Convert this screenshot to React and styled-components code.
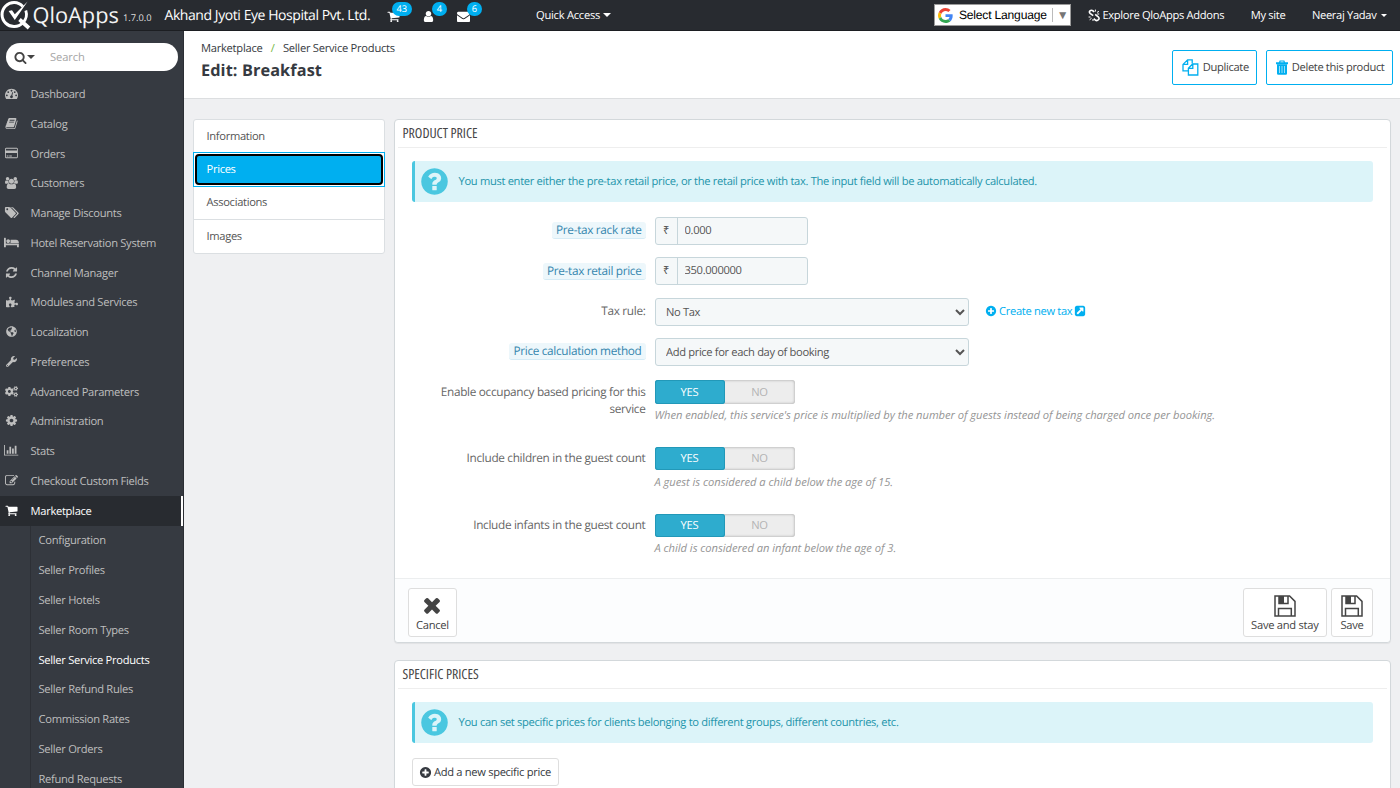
import React, { useState } from 'react';
import styled, { createGlobalStyle, css } from 'styled-components';
import { FaCogs, FaGlobeAmericas, FaPuzzlePiece, FaWrench } from 'react-icons/fa';

const GlobalStyle = createGlobalStyle`
    * {
        box-sizing: border-box;
    }

    body {
        margin: 0;
        height: 788px;
        overflow: hidden;
        background: #eff0f2;
        color: #555;
        font-family: 'Open Sans', 'Noto Sans', sans-serif;
        font-size: 11.17px;
        letter-spacing: -0.32px;
        text-rendering: geometricPrecision;
    }

    button,
    input,
    select {
        letter-spacing: inherit;
        text-rendering: inherit;
    }

    svg {
        display: block;
        flex-shrink: 0;
    }
`;

const glyphs = {
    dashboard: [1792, 'M384 1152q0-53-37.5-90.5t-90.5-37.5-90.5 37.5-37.5 90.5 37.5 90.5 90.5 37.5 90.5-37.5 37.5-90.5zm192-448q0-53-37.5-90.5t-90.5-37.5-90.5 37.5-37.5 90.5 37.5 90.5 90.5 37.5 90.5-37.5 37.5-90.5zm428 481l101-382q6-26-7.5-48.5t-38.5-29.5-48 6.5-30 39.5l-101 382q-60 5-107 43.5t-63 98.5q-20 77 20 146t117 89 146-20 89-117q16-60-6-117t-72-91zm660-33q0-53-37.5-90.5t-90.5-37.5-90.5 37.5-37.5 90.5 37.5 90.5 90.5 37.5 90.5-37.5 37.5-90.5zm-640-640q0-53-37.5-90.5t-90.5-37.5-90.5 37.5-37.5 90.5 37.5 90.5 90.5 37.5 90.5-37.5 37.5-90.5zm448 192q0-53-37.5-90.5t-90.5-37.5-90.5 37.5-37.5 90.5 37.5 90.5 90.5 37.5 90.5-37.5 37.5-90.5zm320 448q0 261-141 483-19 29-54 29h-1402q-35 0-54-29-141-221-141-483 0-182 71-348t191-286 286-191 348-71 348 71 286 191 191 286 71 348z'],
    book: [1792, 'M1703 478q40 57 18 129l-275 906q-19 64-76.5 107.5t-122.5 43.5h-923q-77 0-148.5-53.5t-99.5-131.5q-24-67-2-127 0-4 3-27t4-37q1-8-3-21.5t-3-19.5q2-11 8-21t16.5-23.5 16.5-23.5q23-38 45-91.5t30-91.5q3-10 .5-30t-.5-28q3-11 17-28t17-23q21-36 42-92t25-90q1-9-2.5-32t.5-28q4-13 22-30.5t22-22.5q19-26 42.5-84.5t27.5-96.5q1-8-3-25.5t-2-26.5q2-8 9-18t18-23 17-21q8-12 16.5-30.5t15-35 16-36 19.5-32 26.5-23.5 36-11.5 47.5 5.5l-1 3q38-9 51-9h761q74 0 114 56t18 130l-274 906q-36 119-71.5 153.5t-128.5 34.5h-869q-27 0-38 15-11 16-1 43 24 70 144 70h923q29 0 56-15.5t35-41.5l300-987q7-22 5-57 38 15 59 43zm-1064 2q-4 13 2 22.5t20 9.5h608q13 0 25.5-9.5t16.5-22.5l21-64q4-13-2-22.5t-20-9.5h-608q-13 0-25.5 9.5t-16.5 22.5zm-83 256q-4 13 2 22.5t20 9.5h608q13 0 25.5-9.5t16.5-22.5l21-64q4-13-2-22.5t-20-9.5h-608q-13 0-25.5 9.5t-16.5 22.5z'],
    card: [1920, 'M1760 128q66 0 113 47t47 113v1216q0 66-47 113t-113 47h-1600q-66 0-113-47t-47-113v-1216q0-66 47-113t113-47h1600zm-1600 128q-13 0-22.5 9.5t-9.5 22.5v224h1664v-224q0-13-9.5-22.5t-22.5-9.5h-1600zm1600 1280q13 0 22.5-9.5t9.5-22.5v-608h-1664v608q0 13 9.5 22.5t22.5 9.5h1600zm-1504-128v-128h256v128h-256zm384 0v-128h384v128h-384z'],
    users: [1920, 'M593 896q-162 5-265 128h-134q-82 0-138-40.5t-56-118.5q0-353 124-353 6 0 43.5 21t97.5 42.5 119 21.5q67 0 133-23-5 37-5 66 0 159 93 293zm1071 637q0 120-73 189.5t-194 69.5h-874q-121 0-194-69.5t-73-189.5q0-53 3.5-103.5t14-109 26.5-108.5 43-97.5 62-81 85.5-53.5 111.5-20q10 0 43 21.5t73 48 107 48 135 21.5 135-21.5 107-48 73-48 43-21.5q61 0 111.5 20t85.5 53.5 62 81 43 97.5 26.5 108.5 14 109 3.5 103.5zm-1024-1277q0 106-75 181t-181 75-181-75-75-181 75-181 181-75 181 75 75 181zm704 384q0 159-112.5 271.5t-271.5 112.5-271.5-112.5-112.5-271.5 112.5-271.5 271.5-112.5 271.5 112.5 112.5 271.5zm576 225q0 78-56 118.5t-138 40.5h-134q-103-123-265-128 93-134 93-293 0-29-5-66 66 23 133 23 59 0 119-21.5t97.5-42.5 43.5-21q124 0 124 353zm-128-609q0 106-75 181t-181 75-181-75-75-181 75-181 181-75 181 75 75 181z'],
    tags: [2048, 'M576 448q0-53-37.5-90.5t-90.5-37.5-90.5 37.5-37.5 90.5 37.5 90.5 90.5 37.5 90.5-37.5 37.5-90.5zm1067 576q0 53-37 90l-491 492q-39 37-91 37-53 0-90-37l-715-716q-38-37-64.5-101t-26.5-117v-416q0-52 38-90t90-38h416q53 0 117 26.5t102 64.5l715 714q37 39 37 91zm384 0q0 53-37 90l-491 492q-39 37-91 37-36 0-59-14t-53-45l470-470q37-37 37-90 0-52-37-91l-715-714q-38-38-102-64.5t-117-26.5h224q53 0 117 26.5t102 64.5l715 714q37 39 37 91z'],
    bed: [2048, 'M256 1024h1728q26 0 45 19t19 45v448h-256v-256h-1536v256h-256v-1216q0-26 19-45t45-19h128q26 0 45 19t19 45v704zm576-320q0-106-75-181t-181-75-181 75-75 181 75 181 181 75 181-75 75-181zm1216 256v-64q0-159-112.5-271.5t-271.5-112.5h-704q-26 0-45 19t-19 45v384h1152z'],
    refresh: [1792, 'M1639 1056q0 5-1 7-64 268-268 434.5t-478 166.5q-146 0-282.5-55t-243.5-157l-129 129q-19 19-45 19t-45-19-19-45v-448q0-26 19-45t45-19h448q26 0 45 19t19 45-19 45l-137 137q71 66 161 102t187 36q134 0 250-65t186-179q11-17 53-117 8-23 30-23h192q13 0 22.5 9.5t9.5 22.5zm25-800v448q0 26-19 45t-45 19h-448q-26 0-45-19t-19-45 19-45l138-138q-148-137-349-137-134 0-250 65t-186 179q-11 17-53 117-8 23-30 23h-199q-13 0-22.5-9.5t-9.5-22.5v-7q65-268 270-434.5t480-166.5q146 0 284 55.5t245 156.5l130-129q19-19 45-19t45 19 19 45z'],
    cog: [1792, 'M1152 896q0-106-75-181t-181-75-181 75-75 181 75 181 181 75 181-75 75-181zm512-109v222q0 12-8 23t-20 13l-185 28q-19 54-39 91 35 50 107 138 10 12 10 25t-9 23q-27 37-99 108t-94 71q-12 0-26-9l-138-108q-44 23-91 38-16 136-29 186-7 28-36 28h-222q-14 0-24.5-8.5t-11.5-21.5l-28-184q-49-16-90-37l-141 107q-10 9-25 9-14 0-25-11-126-114-165-168-7-10-7-23 0-12 8-23 15-21 51-66.5t54-70.5q-27-50-41-99l-183-27q-13-2-21-12.5t-8-23.5v-222q0-12 8-23t19-13l186-28q14-46 39-92-40-57-107-138-10-12-10-24 0-10 9-23 26-36 98.5-107.5t94.5-71.5q13 0 26 10l138 107q44-23 91-38 16-136 29-186 7-28 36-28h222q14 0 24.5 8.5t11.5 21.5l28 184q49 16 90 37l142-107q9-9 24-9 13 0 25 10 129 119 165 170 7 8 7 22 0 12-8 23-15 21-51 66.5t-54 70.5q26 50 41 98l183 28q13 2 21 12.5t8 23.5z'],
    chart: [2048, 'M640 896v512h-256v-512h256zm384-512v1024h-256v-1024h256zm1024 1152v128h-2048v-1536h128v1408h1920zm-640-896v768h-256v-768h256zm384-384v1152h-256v-1152h256z'],
    edit: [1792, 'M888 1184l116-116-152-152-116 116v56h96v96h56zm440-720q-16-16-33 1l-350 350q-17 17-1 33t33-1l350-350q17-17 1-33zm80 594v190q0 119-84.5 203.5t-203.5 84.5h-832q-119 0-203.5-84.5t-84.5-203.5v-832q0-119 84.5-203.5t203.5-84.5h832q63 0 117 25 15 7 18 23 3 17-9 29l-49 49q-14 14-32 8-23-6-45-6h-832q-66 0-113 47t-47 113v832q0 66 47 113t113 47h832q66 0 113-47t47-113v-126q0-13 9-22l64-64q15-15 35-7t20 29zm-96-738l288 288-672 672h-288v-288zm444 132l-92 92-288-288 92-92q28-28 68-28t68 28l152 152q28 28 28 68t-28 68z'],
    cart: [1792, 'M704 1536q0 52-38 90t-90 38-90-38-38-90 38-90 90-38 90 38 38 90zm896 0q0 52-38 90t-90 38-90-38-38-90 38-90 90-38 90 38 38 90zm128-1088v512q0 24-16.5 42.5t-40.5 21.5l-1044 122q13 60 13 70 0 16-24 64h920q26 0 45 19t19 45-19 45-45 19h-1024q-26 0-45-19t-19-45q0-11 8-31.5t16-36 21.5-40 15.5-29.5l-177-823h-204q-26 0-45-19t-19-45 19-45 45-19h256q16 0 28.5 6.5t19.5 15.5 13 24.5 8 26 5.5 29.5 4.5 26h1201q26 0 45 19t19 45z'],
    user: [1792, 'M1536 1399q0 109-62.5 187t-150.5 78h-854q-88 0-150.5-78t-62.5-187q0-85 8.5-160.5t31.5-152 58.5-131 94-89 134.5-34.5q131 128 313 128t313-128q76 0 134.5 34.5t94 89 58.5 131 31.5 152 8.5 160.5zm-256-887q0 159-112.5 271.5t-271.5 112.5-271.5-112.5-112.5-271.5 112.5-271.5 271.5-112.5 271.5 112.5 112.5 271.5z'],
    envelope: [1792, 'M1792 710v794q0 66-47 113t-113 47h-1472q-66 0-113-47t-47-113v-794q44 49 101 87 362 246 497 345 57 42 92.5 65.5t94.5 48 110 24.5h2q51 0 110-24.5t94.5-48 92.5-65.5q170-123 498-345 57-39 100-87zm0-294q0 79-49 151t-122 123q-376 261-468 325-10 7-42.5 31t-54 38.5-52 32.5-57.5 27-50 9h-2q-23 0-50-9t-57.5-27-52-32.5-54-38.5-42.5-31q-91-64-262-182.5t-205-142.5q-62-42-117-115.5t-55-136.5q0-78 41.5-130t118.5-52h1472q65 0 112.5 47t47.5 113z'],
    search: [1792, 'M1216 832q0-185-131.5-316.5t-316.5-131.5-316.5 131.5-131.5 316.5 131.5 316.5 316.5 131.5 316.5-131.5 131.5-316.5zm512 832q0 52-38 90t-90 38q-54 0-90-38l-343-342q-179 124-399 124-143 0-273.5-55.5t-225-150-150-225-55.5-273.5 55.5-273.5 150-225 225-150 273.5-55.5 273.5 55.5 225 150 150 225 55.5 273.5q0 220-124 399l343 343q37 37 37 90z'],
    plus: [1792, 'M1344 960v-128q0-26-19-45t-45-19h-256v-256q0-26-19-45t-45-19h-128q-26 0-45 19t-19 45v256h-256q-26 0-45 19t-19 45v128q0 26 19 45t45 19h256v256q0 26 19 45t45 19h128q26 0 45-19t19-45v-256h256q26 0 45-19t19-45zm320-64q0 209-103 385.5t-279.5 279.5-385.5 103-385.5-103-279.5-279.5-103-385.5 103-385.5 279.5-279.5 385.5-103 385.5 103 279.5 279.5 103 385.5z'],
    question: [1792, 'M1024 1376v-192q0-14-9-23t-23-9h-192q-14 0-23 9t-9 23v192q0 14 9 23t23 9h192q14 0 23-9t9-23zm256-672q0-88-55.5-163t-138.5-116-170-41q-243 0-371 213-15 24 8 42l132 100q7 6 19 6 16 0 25-12 53-68 86-92 34-24 86-24 48 0 85.5 26t37.5 59q0 38-20 61t-68 45q-63 28-115.5 86.5t-52.5 125.5v36q0 14 9 23t23 9h192q14 0 23-9t9-23q0-19 21.5-49.5t54.5-49.5q32-18 49-28.5t46-35 44.5-48 28-60.5 12.5-81zm384 192q0 209-103 385.5t-279.5 279.5-385.5 103-385.5-103-279.5-279.5-103-385.5 103-385.5 279.5-279.5 385.5-103 385.5 103 279.5 279.5 103 385.5z'],
    external: [1792, 'M1408 928v-480q0-26-19-45t-45-19h-480q-42 0-59 39-17 41 14 70l144 144-534 534q-19 19-19 45t19 45l102 102q19 19 45 19t45-19l534-534 144 144q18 19 45 19 12 0 25-5 39-17 39-59zm256-512v960q0 119-84.5 203.5t-203.5 84.5h-960q-119 0-203.5-84.5t-84.5-203.5v-960q0-119 84.5-203.5t203.5-84.5h960q119 0 203.5 84.5t84.5 203.5z'],
    times: [1792, 'M1490 1322q0 40-28 68l-136 136q-28 28-68 28t-68-28l-294-294-294 294q-28 28-68 28t-68-28l-136-136q-28-28-28-68t28-68l294-294-294-294q-28-28-28-68t28-68l136-136q28-28 68-28t68 28l294 294 294-294q28-28 68-28t68 28l136 136q28 28 28 68t-28 68l-294 294 294 294q28 28 28 68z'],
};

const Glyph = ({ name, size = 13 }) => {
    const [width, d] = glyphs[name];
    return (
        <svg width={(size * width) / 1792} height={size} viewBox={`0 0 ${width} 1792`} fill="currentColor">
            <path d={d} />
        </svg>
    );
};

const Caret = styled.span`
    display: inline-block;
    border: ${({ $size = 4 }) => $size}px solid transparent;
    border-top-color: currentColor;
    border-bottom: 0;
`;

/* ---------- top bar ---------- */

const TopBar = styled.header`
    display: flex;
    align-items: center;
    height: 31px;
    background: #282b30;
    border-bottom: 1px solid #1c1e22;
    color: #fff;
    white-space: nowrap;
`;

const Logo = styled.div`
    display: flex;
    align-items: center;
    gap: 0.5px;
    width: 123px;
    height: 31px;
    color: #f4f4f4;
    font-size: 21.8px;
    letter-spacing: 0;
    line-height: 31px;
`;

const Version = styled.span`
    width: 41.5px;
    padding-top: 4px;
    color: #ddd;
    font-size: 9.3px;
    letter-spacing: 0;
`;

const ShopName = styled.span`
    width: 222.5px;
    font-size: 14px;
    letter-spacing: -0.43px;
`;

const Notification = styled.span`
    position: relative;
    width: 35px;
    height: 31px;
    padding-top: 10px;
`;

const Badge = styled.span`
    position: absolute;
    top: 2px;
    left: ${({ $left }) => $left}px;
    min-width: 15px;
    height: 14.5px;
    padding: 0 4.5px;
    border-radius: 8px;
    background: #00aff0;
    font-size: 9.3px;
    letter-spacing: 0;
    line-height: 14px;
    text-align: center;
`;

const QuickAccess = styled.span`
    display: flex;
    align-items: center;
    gap: 3px;
    margin-left: 44px;
    letter-spacing: -0.25px;
`;

const TopRight = styled.div`
    display: flex;
    align-items: center;
    margin-left: auto;
    padding-right: 13px;
`;

const Translate = styled.div`
    display: flex;
    align-items: center;
    width: 137.5px;
    height: 22px;
    margin-right: 17px;
    padding: 0 4px 0 3px;
    border: 1px solid #9b9b9b;
    background: #fff;
    color: #000;
    font-family: 'Liberation Sans', Arial, sans-serif;
    font-size: 12.1px;
    letter-spacing: -0.2px;

    svg {
        margin-right: 6px;
    }
`;

const TranslateArrow = styled.span`
    height: 14px;
    margin-left: 5px;
    padding-left: 4px;
    border-left: 1px solid #bbb;
    color: #767676;
    font-size: 12px;
    line-height: 14px;
`;

const TopLink = styled.a`
    display: flex;
    align-items: center;
    gap: ${({ $gap = 6 }) => $gap}px;
    margin-right: ${({ $after = 0 }) => $after}px;
`;

/* ---------- sidebar ---------- */

const Body = styled.div`
    display: flex;
    height: 757px;
    overflow: hidden;
`;

const Sidebar = styled.nav`
    flex: 0 0 184px;
    overflow: hidden;
    background: #363a41;
    border-right: 1px solid #2b2e34;
    color: #bebebe;
    letter-spacing: -0.3px;
`;

const SearchBox = styled.div`
    display: flex;
    align-items: center;
    width: 172px;
    height: 28px;
    margin: 12px 0 8.6px 6px;
    padding-left: 8px;
    border-radius: 14px;
    background: #fff;
    color: #444;

    input {
        width: 110px;
        margin-left: 15px;
        padding: 0;
        border: 0;
        outline: 0;
        background: none;
        font: inherit;
        letter-spacing: -0.1px;

        &::placeholder {
            color: #a5a5a5;
        }
    }
`;

const MenuItem = styled.a`
    display: flex;
    align-items: center;
    height: 29.78px;
    padding-left: 5px;

    ${({ $active }) => $active && css`
        background: #282b30;
        border-right: 2px solid #fff;
        color: #fff;
    `}
`;

const MenuIcon = styled.span`
    display: flex;
    justify-content: center;
    width: 13px;
    margin: -2px 12.5px 0 0;
`;

const SubMenu = styled.div`
    margin-left: 30px;
    border-left: 1px solid #2d3036;
`;

const SubItem = styled.a`
    display: flex;
    align-items: center;
    height: 29.78px;
    padding-left: 7.5px;
    color: ${({ $active }) => ($active ? '#fff' : '#bebebe')};
`;

/* ---------- page ---------- */

const Main = styled.main`
    flex: 1;
    min-width: 0;
`;

const PageHead = styled.div`
    display: flex;
    justify-content: space-between;
    height: 68px;
    padding: 9.5px 7px 0 17px;
    background: #fff;
    border-bottom: 1px solid #dcdee0;
    color: #363a41;
`;

const Breadcrumb = styled.div`
    display: flex;
    gap: 8.3px;
    letter-spacing: -0.26px;
    line-height: 15px;

    i {
        color: #72b73f;
        font-style: normal;
    }
`;

const PageTitle = styled.h1`
    margin: 3.5px 0 0;
    font-size: 16.3px;
    font-weight: 700;
    letter-spacing: 0.1px;
    line-height: 22px;
`;

const HeadActions = styled.div`
    display: flex;
    gap: 9px;
    padding-top: 9.5px;
`;

const HeadButton = styled.button`
    display: flex;
    align-items: center;
    gap: 4px;
    height: 35px;
    padding: 0 7.5px 1px 8.5px;
    border: 1px solid #00aff0;
    border-radius: 2px;
    background: #fff;
    color: #444;
    font: inherit;
    letter-spacing: -0.36px;

    svg {
        color: #00aff0;
    }
`;

const Columns = styled.div`
    display: flex;
    align-items: flex-start;
    gap: 9px;
    padding: 20px 9px 0;
`;

const TabList = styled.div`
    flex: 0 0 192px;
    border: 1px solid #dbdfe2;
    border-radius: 3px;
    background: #fff;
`;

const Tab = styled.button`
    display: block;
    width: 100%;
    height: 33.3px;
    padding: 0 12.5px;
    border: 0;
    border-bottom: 1px solid #dbdfe2;
    background: none;
    color: #555;
    font: inherit;
    text-align: left;

    &:last-child {
        border-bottom: 0;
    }
`;

const ActiveTab = styled.div`
    height: 34.3px;
    margin: -1px -1px 0;
    padding: 1px;
    border: 1px solid #00aff0;
    background: #fff;

    ${Tab} {
        height: 100%;
        padding: 0 9.5px;
        border: 2px solid #000;
        border-radius: 4px;
        background: #00aff0;
        color: #fff;
    }
`;

const Panels = styled.div`
    flex: 1;
    min-width: 0;
`;

const Panel = styled.section`
    margin-bottom: 17.4px;
    border: 1px solid #d3d8db;
    border-radius: 4px;
    background: #fff;
    box-shadow: 0 1px 1px rgba(0, 0, 0, 0.06);
`;

const PanelHeading = styled.h3`
    height: 28px;
    margin: 0 3px;
    padding-left: 4.5px;
    border-bottom: 1px solid #eee;
    color: #444;
    font-size: 13.9px;
    font-stretch: 75%;
    font-weight: 400;
    letter-spacing: -0.03px;
    line-height: 28px;
`;

const PanelBody = styled.div`
    padding: 13.3px 17px 0;
`;

const Alert = styled.div`
    display: flex;
    align-items: center;
    height: 41px;
    padding-left: 3.5px;
    border-left: 3px solid #4ac7e0;
    border-radius: 3px;
    background: #dcf4f9;
    color: #1e94ab;

    svg {
        margin-right: 9px;
        color: #4ac7e0;
    }
`;

const FormRow = styled.div`
    display: grid;
    grid-template-columns: 233.5px 1fr;
    column-gap: 9px;
    height: ${({ $tall }) => ($tall ? 66.6 : 40.4)}px;
`;

const Form = styled.div`
    height: 375.5px;
    padding-top: 14.5px;
`;

const Label = styled.label`
    padding-top: 5.5px;
    color: #666;
    font-size: 11.8px;
    line-height: 17px;
    text-align: right;

    span {
        display: inline-block;
        padding: 0 4px;
        border-bottom: 1px solid #d5ebf5;
        border-radius: 3px;
        background: #edf7fb;
        color: #3586ae;
        line-height: 16px;
    }
`;

const PriceInput = styled.div`
    display: flex;
    width: 153.5px;
    height: 28px;
    border: 1px solid #c7d6db;
    border-radius: 3px;
    background: #f5f8f9;
    overflow: hidden;

    span {
        width: 22px;
        border-right: 1px solid #c7d6db;
        line-height: 25px;
        text-align: center;
    }

    input {
        flex: 1;
        min-width: 0;
        padding: 0 7px 0.5px;
        border: 0;
        background: none;
        color: #555;
        font: inherit;
    }
`;

const Inline = styled.div`
    display: flex;
    align-items: flex-start;
    gap: 16px;
`;

const Select = styled.select`
    width: 314.5px;
    height: 28px;
    padding: 1px 2px 0 6.5px;
    border: 1px solid #c7d6db;
    border-radius: 3px;
    background: #f5f8f9;
    color: #555;
    font: inherit;
    letter-spacing: -0.35px;
`;

const TaxLink = styled.a`
    display: flex;
    align-items: center;
    gap: 2px;
    height: 27px;
    color: #00aff0;
`;

const Switch = styled.div`
    display: flex;
    width: 140px;
    height: 23.5px;
    margin-top: 2px;
    border-radius: 3px;
    background: #ededed;
    box-shadow: inset 0 0 3px rgba(0, 0, 0, 0.35);
`;

const SwitchSide = styled.button`
    width: 70px;
    padding: 0;
    border: 0;
    border-radius: 3px;
    background: none;
    color: #b3b3b3;
    font: inherit;
    letter-spacing: -0.2px;
    line-height: 21px;

    ${({ $on }) => $on && css`
        background: #2eacce;
        box-shadow: inset 0 0 0 1px #2298b8;
        color: #fff;
    `}
`;

const Hint = styled.p`
    margin: 4.3px 0 0;
    color: #959595;
    font-style: italic;
    letter-spacing: -0.03px;
    line-height: 16px;
`;

const PanelFooter = styled.div`
    display: flex;
    gap: 4.5px;
    height: 64px;
    padding: 9px 17px 0 13px;
    border-top: 1px solid #eceeef;
    border-radius: 0 0 4px 4px;
    background: #fcfdfe;
`;

const FooterButton = styled.button`
    display: flex;
    flex-direction: column;
    align-items: center;
    justify-content: flex-end;
    gap: 1px;
    min-width: 42px;
    height: 49px;
    margin-right: ${({ $push }) => ($push ? 'auto' : 0)};
    padding: 0 7px 3px;
    border: 1px solid #dedede;
    border-radius: 3px;
    background: #fff;
    color: #444;
    font: inherit;
    letter-spacing: -0.27px;
`;

const AddButton = styled.button`
    display: flex;
    align-items: center;
    gap: 2px;
    height: 27.5px;
    margin-top: 15px;
    padding: 0 7px 0 6px;
    border: 1px solid #dedede;
    border-radius: 3px;
    background: #fff;
    color: #363a41;
    font: inherit;
`;

const SpecificBody = styled(PanelBody)`
    height: 130px;
`;

const QloMark = () => (
    <svg width="32" height="31" viewBox="0 0 32 31" fill="none" stroke="#fff">
        <path d="M22.8 6.4A12 12 0 1 0 22.8 22.8" strokeWidth="3" />
        <path d="M25.8 10.5A12 12 0 0 1 22.8 22.8" strokeWidth="2.8" />
        <path d="M19.5 19.5l9.5 8.5" strokeWidth="3.8" />
        <path d="M8.6 11l3.4-.8 2.8 4L27.6 1.6 14.800 20z" fill="#fff" stroke="none" />
    </svg>
);

const GoogleMark = () => (
    <svg width="15" height="15" viewBox="0 0 48 48">
        <path fill="#EA4335" d="M24 9.5c3.54 0 6.71 1.22 9.21 3.6l6.85-6.85C35.9 2.38 30.47 0 24 0 14.62 0 6.51 5.38 2.56 13.22l7.98 6.19C12.43 13.72 17.74 9.5 24 9.5z" />
        <path fill="#4285F4" d="M46.98 24.55c0-1.57-.15-3.09-.38-4.55H24v9.02h12.94c-.58 2.96-2.26 5.48-4.78 7.18l7.73 6c4.51-4.18 7.09-10.36 7.09-17.65z" />
        <path fill="#FBBC05" d="M10.53 28.59c-.48-1.45-.76-2.99-.76-4.59s.27-3.14.76-4.59l-7.98-6.19C.92 16.46 0 20.12 0 24c0 3.88.92 7.54 2.56 10.78l7.97-6.19z" />
        <path fill="#34A853" d="M24 48c6.48 0 11.93-2.13 15.89-5.81l-7.73-6c-2.15 1.45-4.92 2.3-8.16 2.3-6.26 0-11.57-4.22-13.47-9.91l-7.98 6.19C6.51 42.62 14.62 48 24 48z" />
    </svg>
);

const AddonsIcon = () => (
    <svg width="12" height="13" viewBox="0 0 12 13" fill="none" stroke="#fff" strokeWidth="1.6">
        <path d="M5.2 6.6L2.4 4.6Q.6 3 2 1.8T5.2 2l1 1" />
        <path d="M7.2 5.4l3 2.4q1.6 1.6.2 3T7.2 11l-1.4-1.4" />
        <path d="M7.4.6v2M9 3.4l2-1M3.6 9.2l-2 1.6M5 10v2M.6 8h2M9.2 5h2" strokeWidth="1" />
    </svg>
);

const CopyIcon = () => (
    <svg width="17" height="17" viewBox="0 0 17 17" fill="none" stroke="currentColor" strokeWidth="1.3">
        <path d="M6.4 11.8H1V5.4L5.6.8h4.6v3.6M5.6.8v4.6H1" />
        <path d="M6.4 9.2L10.6 5h5.2v11H6.4zM10.8 5v4.4H6.4" />
    </svg>
);

const TrashIcon = () => (
    <svg width="12" height="15" viewBox="0 0 12 15" fill="currentColor">
        <path fillRule="evenodd" d="M3.6.6h4.8l.6 1.600H12V4.200H0V2.200h3zM4.600 1.500l-.3.7h3.400l-.3-.7z" />
        <path fillRule="evenodd" d="M1 4.200h10V13.500q0 1.200-1.200 1.200H2.200q-1.200 0-1.200-1.200zM3.200 6v7h.6V6zM5.700 6v7h.6V6zM8.200 6v7h.6V6z" />
    </svg>
);

const SaveIcon = () => (
    <svg width="22" height="22" viewBox="0 0 22 22" fill="none" stroke="#444" strokeWidth="1.5">
        <path d="M1 1h14.6L21 6.400V21H1z" />
        <path d="M5 1v7.500h9V1" />
        <path d="M5 1h5v7H5z" fill="#444" stroke="none" />
        <path d="M4.500 21v-7.500h12.800V21" />
    </svg>
);

const menu = [
    ['Dashboard', <Glyph name="dashboard" />],
    ['Catalog', <Glyph name="book" />],
    ['Orders', <Glyph name="card" size={12} />],
    ['Customers', <Glyph name="users" size={12} />],
    ['Manage Discounts', <Glyph name="tags" />],
    ['Hotel Reservation System', <Glyph name="bed" />],
    ['Channel Manager', <Glyph name="refresh" />],
    ['Modules and Services', <FaPuzzlePiece size={12} />],
    ['Localization', <FaGlobeAmericas size={11} />],
    ['Preferences', <FaWrench size={11} />],
    ['Advanced Parameters', <FaCogs size={13} />],
    ['Administration', <Glyph name="cog" />],
    ['Stats', <Glyph name="chart" size={12.5} />],
    ['Checkout Custom Fields', <Glyph name="edit" />],
    ['Marketplace', <Glyph name="cart" />],
];

const subMenu = [
    'Configuration',
    'Seller Profiles',
    'Seller Hotels',
    'Seller Room Types',
    'Seller Service Products',
    'Seller Refund Rules',
    'Commission Rates',
    'Seller Orders',
    'Refund Requests',
];

const tabs = ['Information', 'Prices', 'Associations', 'Images'];

const YesNo = () => {
    const [on, setOn] = useState(true);

    return (
        <Switch>
            <SwitchSide $on={on} onClick={() => setOn(true)}>YES</SwitchSide>
            <SwitchSide $on={!on} onClick={() => setOn(false)}>NO</SwitchSide>
        </Switch>
    );
};

const SwitchRow = ({ label, hint }) => (
    <FormRow $tall>
        <Label>{label}</Label>
        <div>
            <YesNo />
            <Hint>{hint}</Hint>
        </div>
    </FormRow>
);

const PriceRow = ({ label, value }) => (
    <FormRow>
        <Label><span>{label}</span></Label>
        <PriceInput>
            <span>₹</span>
            <input defaultValue={value} />
        </PriceInput>
    </FormRow>
);

const Header = () => (
    <TopBar>
        <Logo><QloMark />QloApps</Logo>
        <Version>1.7.0.0</Version>
        <ShopName>Akhand Jyoti Eye Hospital Pvt. Ltd.</ShopName>
        <Notification><Glyph name="cart" /><Badge $left={5}>43</Badge></Notification>
        <Notification><Glyph name="user" /><Badge $left={10}>4</Badge></Notification>
        <Notification><Glyph name="envelope" /><Badge $left={10}>6</Badge></Notification>
        <QuickAccess>Quick Access <Caret /></QuickAccess>
        <TopRight>
            <Translate>
                <GoogleMark />
                Select Language
                <TranslateArrow>▼</TranslateArrow>
            </Translate>
            <TopLink $gap={2} $after={26.5}><AddonsIcon />Explore QloApps Addons</TopLink>
            <TopLink $after={26.5}>My site</TopLink>
            <TopLink $gap={4.5}>Neeraj Yadav <Caret $size={3.5} /></TopLink>
        </TopRight>
    </TopBar>
);

const SideMenu = () => (
    <Sidebar>
        <SearchBox>
            <Glyph name="search" size={13} />
            <Caret />
            <input placeholder="Search" />
        </SearchBox>
        {menu.map(([label, icon]) => (
            <MenuItem key={label} $active={label === 'Marketplace'}>
                <MenuIcon>{icon}</MenuIcon>
                {label}
            </MenuItem>
        ))}
        <SubMenu>
            {subMenu.map(label => (
                <SubItem key={label} $active={label === 'Seller Service Products'}>{label}</SubItem>
            ))}
        </SubMenu>
    </Sidebar>
);

const App = () => {
    const [tab, setTab] = useState('Prices');

    return (
        <>
            <GlobalStyle />
            <Header />
            <Body>
                <SideMenu />
                <Main>
                    <PageHead>
                        <div>
                            <Breadcrumb>Marketplace <i>/</i> Seller Service Products</Breadcrumb>
                            <PageTitle>Edit: Breakfast</PageTitle>
                        </div>
                        <HeadActions>
                            <HeadButton><CopyIcon />Duplicate</HeadButton>
                            <HeadButton><TrashIcon />Delete this product</HeadButton>
                        </HeadActions>
                    </PageHead>
                    <Columns>
                        <TabList>
                            {tabs.map(name => (name === tab ? (
                                <ActiveTab key={name}><Tab>{name}</Tab></ActiveTab>
                            ) : (
                                <Tab key={name} onClick={() => setTab(name)}>{name}</Tab>
                            )))}
                        </TabList>
                        <Panels>
                            <Panel>
                                <PanelHeading>PRODUCT PRICE</PanelHeading>
                                <PanelBody>
                                    <Alert>
                                        <Glyph name="question" size={31} />
                                        You must enter either the pre-tax retail price, or the retail price with tax. The input field will be automatically calculated.
                                    </Alert>
                                    <Form>
                                        <PriceRow label="Pre-tax rack rate" value="0.000" />
                                        <PriceRow label="Pre-tax retail price" value="350.000000" />
                                        <FormRow>
                                            <Label>Tax rule:</Label>
                                            <Inline>
                                                <Select><option>No Tax</option></Select>
                                                <TaxLink>
                                                    <Glyph name="plus" size={12} />
                                                    Create new tax
                                                    <Glyph name="external" size={12} />
                                                </TaxLink>
                                            </Inline>
                                        </FormRow>
                                        <FormRow>
                                            <Label><span>Price calculation method</span></Label>
                                            <Select><option>Add price for each day of booking</option></Select>
                                        </FormRow>
                                        <SwitchRow
                                            label="Enable occupancy based pricing for this service"
                                            hint="When enabled, this service's price is multiplied by the number of guests instead of being charged once per booking."
                                        />
                                        <SwitchRow
                                            label="Include children in the guest count"
                                            hint="A guest is considered a child below the age of 15."
                                        />
                                        <SwitchRow
                                            label="Include infants in the guest count"
                                            hint="A child is considered an infant below the age of 3."
                                        />
                                    </Form>
                                </PanelBody>
                                <PanelFooter>
                                    <FooterButton $push><Glyph name="times" size={24} />Cancel</FooterButton>
                                    <FooterButton><SaveIcon />Save and stay</FooterButton>
                                    <FooterButton><SaveIcon />Save</FooterButton>
                                </PanelFooter>
                            </Panel>
                            <Panel>
                                <PanelHeading>SPECIFIC PRICES</PanelHeading>
                                <SpecificBody>
                                    <Alert>
                                        <Glyph name="question" size={31} />
                                        You can set specific prices for clients belonging to different groups, different countries, etc.
                                    </Alert>
                                    <AddButton><Glyph name="plus" size={13} />Add a new specific price</AddButton>
                                </SpecificBody>
                            </Panel>
                        </Panels>
                    </Columns>
                </Main>
            </Body>
        </>
    );
};

export default App;
